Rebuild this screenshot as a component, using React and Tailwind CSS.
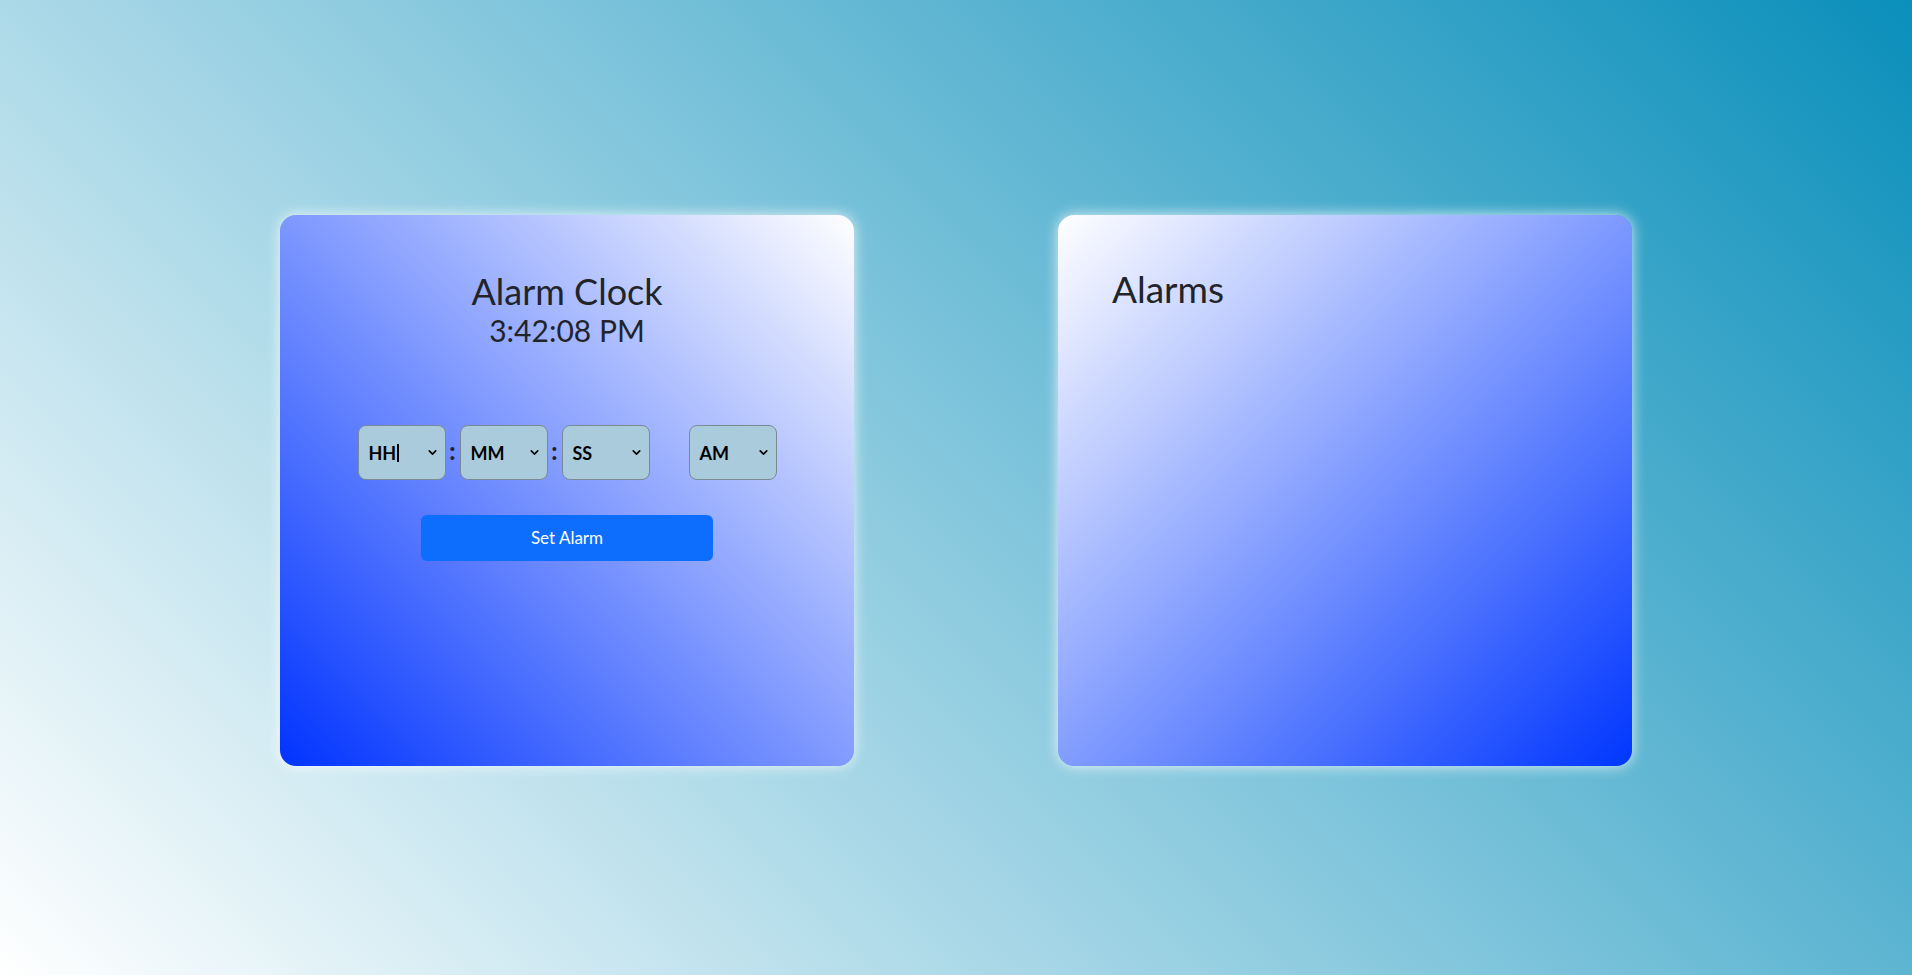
import { ChevronDown } from 'lucide-react';

const Picker = ({ label, caret = false, className = '' }) => (
  <div
    className={`flex items-center justify-between w-[88px] h-[55px] pl-[10px] pr-[6px] rounded-[8px] border border-[#7a8a94] bg-[#a9cbdb] ${className}`}
  >
    <span className="flex items-center text-[18px] font-bold text-black leading-none">
      {label}
      {caret && <span className="inline-block w-[1.5px] h-[18px] bg-black ml-[1px]" />}
    </span>
    <ChevronDown size={13} strokeWidth={3} className="text-black" />
  </div>
);

const Colon = () => (
  <span className="w-[14px] text-center text-[24px] font-black text-[#212529] leading-none -mt-[3px]">:</span>
);

export default function App() {
  return (
    <div className="min-h-screen w-full flex justify-center items-start pt-[215px] gap-[204px] bg-[linear-gradient(45deg,#ffffff,#0a8fbb)] font-['Lato','Open_Sans',sans-serif] text-[#212529]">
      {/* Clock card */}
      <div className="w-[574px] h-[551px] rounded-[16px] bg-[linear-gradient(45deg,#0033ff,#ffffff)] shadow-[0_0_14px_rgba(255,255,255,0.8)] flex flex-col items-center pt-[55px]">
        <h1 className="text-[36px] leading-[1.2]">Alarm Clock</h1>
        <div className="text-[30px] leading-[1.2] -mt-[1px]">3:42:08 PM</div>

        <div className="flex items-center mt-[77px]">
          <Picker label="HH" caret />
          <Colon />
          <Picker label="MM" />
          <Colon />
          <Picker label="SS" />
          <Picker label="AM" className="ml-[39px]" />
        </div>

        <button className="mt-[35px] w-[292px] h-[46px] rounded-[6px] bg-[#0d6efd] text-white text-[17px]">
          Set Alarm
        </button>
      </div>

      {/* Alarms list */}
      <div className="w-[574px] h-[551px] rounded-[16px] bg-[linear-gradient(135deg,#ffffff,#0036ff)] shadow-[0_0_14px_rgba(255,255,255,0.8)] pt-[52px] pl-[54px]">
        <h2 className="text-[37px] leading-[1.2]">Alarms</h2>
      </div>
    </div>
  );
}
